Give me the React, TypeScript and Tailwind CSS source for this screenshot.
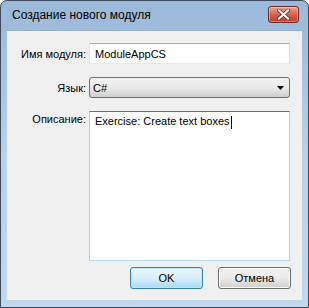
import React from "react";

export default function App() {
  const font = { fontFamily: '"Liberation Sans", Arial, sans-serif' };
  return (
    <div className="w-[309px] h-[308px] bg-white" style={font}>
      <div className="w-[309px] h-[308px] border border-[#3b4a5c] rounded-t-[7px] bg-gradient-to-b from-[#9ab8d8] via-[#b9d1ea] to-[#c1d7ee] flex flex-col">
        <div className="h-[29px] flex items-center justify-between pl-[11px] pr-[9px] shrink-0">
          <span className="text-[12px] text-black leading-none -mt-[1px]">Создание нового модуля</span>
          <div className="w-[31px] h-[17px] mt-[-2px] rounded-[3px] border border-[#6b2a2a] bg-gradient-to-b from-[#e8a493] via-[#d4624c] to-[#c23a24] flex items-center justify-center shadow-[inset_0_0_0_1px_rgba(255,255,255,0.35)]">
            <svg width="13" height="11" viewBox="0 0 13 11">
              <path d="M2 1.5 L11 9.5 M11 1.5 L2 9.5" stroke="#5a2020" strokeWidth="3.6" strokeLinecap="square" />
              <path d="M2 1.5 L11 9.5 M11 1.5 L2 9.5" stroke="#ffffff" strokeWidth="2.2" strokeLinecap="square" />
            </svg>
          </div>
        </div>
        <div className="mx-[6px] h-[270px] bg-[#f0f0f0] border-t border-[#97b1cc] flex flex-col pt-[12px]">
          <div className="grid grid-cols-[79px_201px] gap-x-[3px] gap-y-[13px] text-[11px] leading-[14px]">
            <div className="h-[21px] flex items-center justify-end text-black">Имя модуля:</div>
            <div className="h-[21px] bg-white border border-[#abadb3] border-b-[#e3e9ef] border-r-[#dbdfe6] border-l-[#e2e3ea] flex items-center pl-[5px] text-black">ModuleAppCS</div>

            <div className="h-[21px] flex items-center justify-end text-black">Язык:</div>
            <div className="h-[21px] rounded-[3px] border border-[#707070] bg-gradient-to-b from-[#f2f2f2] via-[#ebebeb] to-[#cfcfcf] flex items-center justify-between pl-[3px] pr-[5px] text-black">
              <span>C#</span>
              <svg width="7" height="4" viewBox="0 0 7 4"><path d="M0 0 H7 L3.5 4 Z" fill="#000" /></svg>
            </div>

            <div className="h-[150px] flex items-start justify-end pt-[1px] text-black">Описание:</div>
            <div className="h-[150px] bg-white border border-[#3d7bad] border-b-[#b7d9ed] border-r-[#b7d9ed] border-l-[#b5cfe7] pl-[5px] pt-[2px] text-black">
              <span>Exercise: Create text boxes</span>
              <span className="inline-block w-[1px] h-[13px] bg-black align-middle ml-[1px]" />
            </div>
          </div>
          <div className="flex justify-end gap-[15px] pr-[11px] mt-[6px]">
            <button className="w-[73px] h-[22px] rounded-[3px] border border-[#3c7fb1] bg-gradient-to-b from-[#eaf6fd] via-[#d9f0fc] to-[#a7d9f5] text-[11px] text-black shadow-[inset_0_0_0_1px_#c4e5f6]">OK</button>
            <button className="w-[73px] h-[22px] rounded-[3px] border border-[#707070] bg-gradient-to-b from-[#f2f2f2] via-[#ebebeb] to-[#cfcfcf] text-[11px] text-black shadow-[inset_0_0_0_1px_#fbfbfb]">Отмена</button>
          </div>
        </div>
      </div>
    </div>
  );
}
